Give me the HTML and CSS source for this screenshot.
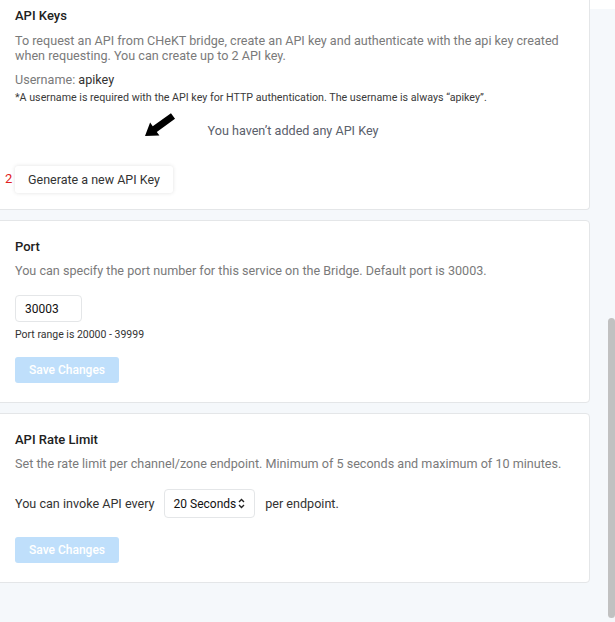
FILE: index.html
```html
<!DOCTYPE html>
<html lang="en">
<head>
    <meta charset="UTF-8">
    <title>Bridge API Settings</title>
    <meta name="viewport" content="width=device-width, initial-scale=1.0">
    <link rel="stylesheet" href="styles.css">
</head>
<body>
    <div class="page">
        <div class="content">
            <div class="card card-keys">
                <h2>API Keys</h2>
                <p class="desc">To request an API from CHeKT bridge, create an API key and authenticate with the api key created when requesting. You can create up to 2 API key.</p>
                <p class="username">Username: <span>apikey</span></p>
                <p class="note">*A username is required with the API key for HTTP authentication. The username is always “apikey”.</p>

                <div class="empty">
                    <svg class="arrow" width="32" height="26" viewBox="-1 -1 32 26">
                        <polygon points="25.97,0.15 30.03,5.85 11.8,18.88 14.42,22.54 0,23 5.12,9.52 7.74,13.18" fill="#000"/>
                    </svg>
                    <span>You haven’t added any API Key</span>
                </div>

                <div class="generate-row">
                    <span class="step">2</span>
                    <button class="btn-white">Generate a new API Key</button>
                </div>
            </div>

            <div class="card">
                <h2>Port</h2>
                <p class="desc">You can specify the port number for this service on the Bridge. Default port is 30003.</p>
                <input class="port-input" type="text" value="30003">
                <p class="hint">Port range is 20000 - 39999</p>
                <button class="btn-save" disabled>Save Changes</button>
            </div>

            <div class="card">
                <h2>API Rate Limit</h2>
                <p class="desc">Set the rate limit per channel/zone endpoint. Minimum of 5 seconds and maximum of 10 minutes.</p>
                <div class="rate-row">
                    <span>You can invoke API every</span>
                    <div class="select">
                        20 Seconds
                        <svg width="7" height="11" viewBox="0 0 7 11">
                            <path d="M1 4 L3.5 1.5 L6 4 M1 7 L3.5 9.5 L6 7" fill="none" stroke="#222" stroke-width="1.4"/>
                        </svg>
                    </div>
                    <span>per endpoint.</span>
                </div>
                <button class="btn-save" disabled>Save Changes</button>
            </div>
        </div>
        <div class="topcorner"></div>
        <div class="scroll-thumb"></div>
    </div>
</body>
</html>
```

FILE: styles.css
```css
html, body {
    margin: 0;
    padding: 0;
}
body {
    font-family: Roboto, "Noto Sans", Arial, sans-serif;
    background-color: #f5f8fb;
    width: 615px;
    height: 622px;
    overflow: hidden;
}
.page {
    position: relative;
    height: 622px;
}
.content {
    width: 596px;
    margin-left: -6px;
    display: flex;
    flex-direction: column;
    gap: 10px;
}
.card {
    background-color: #fff;
    border: 1px solid #e4e6e8;
    border-radius: 4px;
    padding: 17px 20px 19px 20px;
}
.card-keys {
    margin-top: -10px;
    border-top: none;
    border-radius: 0 0 4px 4px;
    padding-top: 17px;
    padding-bottom: 16px;
}
h2 {
    margin: 0;
    font-size: 13px;
    font-weight: 500;
    line-height: 18px;
    color: #212121;
}
.desc {
    margin: 7px 0 0 0;
    font-size: 12.6px;
    line-height: 15px;
    color: #7a7a7a;
}
.card-keys .desc {
    margin-top: 8px;
}
.username {
    margin: 9px 0 0 0;
    font-size: 12.6px;
    line-height: 16px;
    color: #7a7a7a;
}
.username span {
    color: #333;
}
.note {
    margin: 4px 0 0 0;
    font-size: 10.7px;
    line-height: 12px;
    color: #3a3a3a;
}
.empty {
    position: relative;
    height: 40px;
    margin-top: 6px;
    display: flex;
    align-items: center;
    justify-content: center;
    font-size: 12.6px;
    color: #5a606b;
}
.empty span {
    margin-left: 2px;
}
.arrow {
    position: absolute;
    left: 129px;
    top: 2px;
}
.generate-row {
    position: relative;
    margin-top: 16px;
}
.step {
    position: absolute;
    left: -10px;
    top: 5px;
    font-size: 13px;
    color: #e02020;
}
.btn-white {
    font-family: inherit;
    font-size: 12.5px;
    color: #333;
    background-color: #fff;
    border: none;
    border-radius: 3px;
    box-shadow: 0 0 4px rgba(0,0,0,0.12);
    height: 27px;
    padding: 0 13px;
    cursor: pointer;
}
.port-input {
    display: block;
    margin-top: 17px;
    width: 67px;
    height: 27px;
    box-sizing: border-box;
    border: 1px solid #e4e6e8;
    border-radius: 4px;
    padding: 0 9px;
    font-family: inherit;
    font-size: 12px;
    color: #111;
    outline: none;
}
.hint {
    margin: 7px 0 0 0;
    font-size: 10.5px;
    line-height: 12px;
    color: #333;
}
.btn-save {
    display: block;
    margin-top: 19px;
    height: 26px;
    width: 104px;
    padding: 0;
    font-family: inherit;
    font-size: 12px;
    font-weight: 500;
    color: #fff;
    background-color: #bfdffb;
    border: none;
    border-radius: 3px;
}
.hint + .btn-save {
    margin-top: 16px;
}
.rate-row {
    margin-top: 18px;
    display: flex;
    align-items: center;
    font-size: 12.6px;
    color: #333;
}
.select {
    display: flex;
    align-items: center;
    gap: 2px;
    height: 29px;
    box-sizing: border-box;
    margin: 0 10px 0 9px;
    padding: 0 9px 0 9px;
    border: 1px solid #e4e6e8;
    border-radius: 4px;
    font-size: 12px;
    color: #111;
}
.topcorner {
    position: absolute;
    top: 0;
    left: 590px;
    width: 25px;
    height: 9px;
    background-color: #fff;
}
.scroll-thumb {
    position: absolute;
    left: 608px;
    top: 318px;
    width: 7px;
    height: 300px;
    background-color: #c1c1c1;
    border-radius: 4px;
}
```
